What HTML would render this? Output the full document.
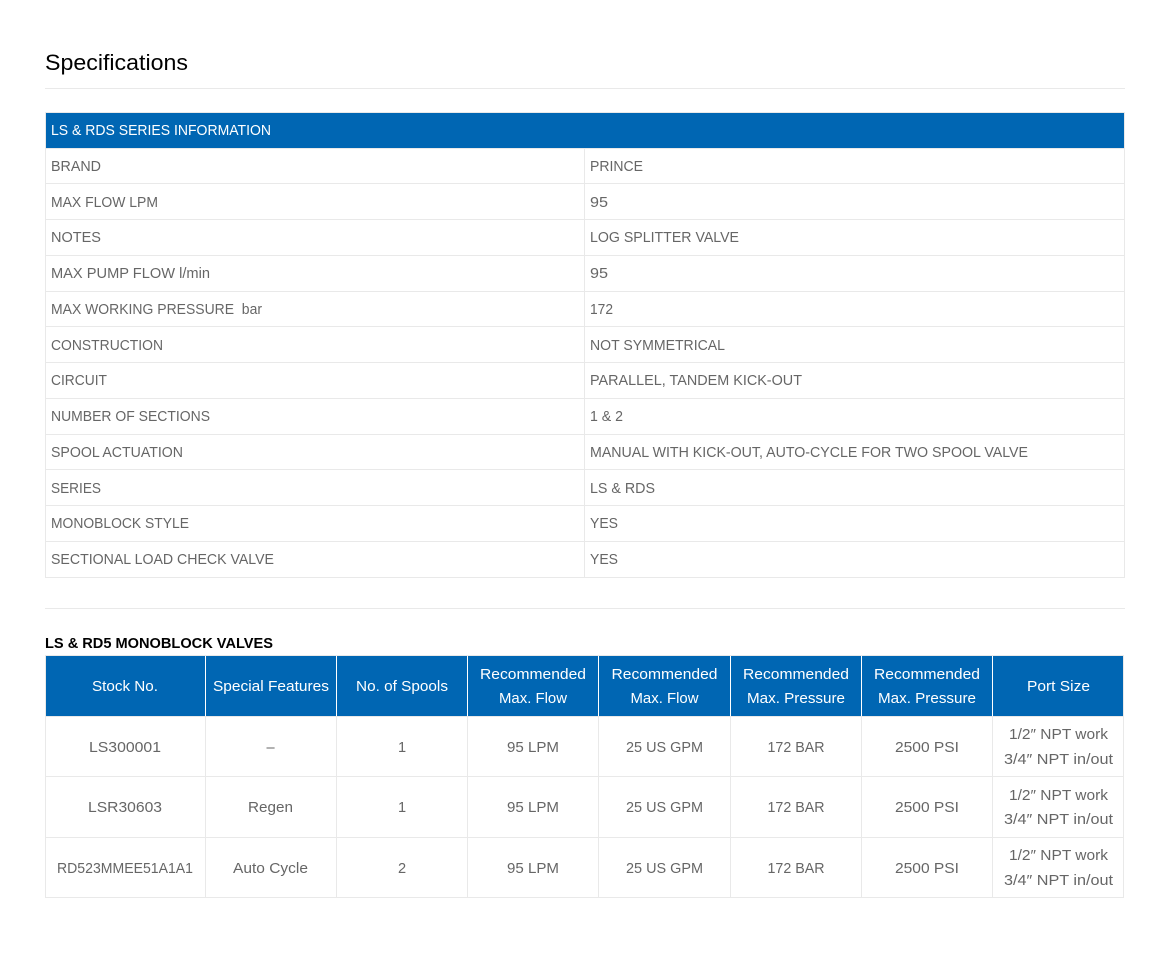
<!DOCTYPE html>
<html lang="en">
<head>
<meta charset="utf-8">
<title>Specifications</title>
<style>
html,body{margin:0;padding:0;background:#fff;width:1170px;height:973px;overflow:hidden}
svg{display:block}
text{font-family:"Liberation Sans",sans-serif;font-size:14.6px;fill:#666}
.w text{fill:#fff}
.c text{text-anchor:middle}
.k text{fill:#000}
.k .t{font-size:22px}
.k .b{font-weight:bold;font-size:14.4px}
.l{fill:#e9e9e9}
</style>
</head>
<body>
<svg width="1170" height="973" viewBox="0 0 1170 973" xmlns="http://www.w3.org/2000/svg">
<rect width="1170" height="973" fill="#fff"/>

<!-- rules -->
<rect class="l" x="45" y="88" width="1080" height="1"/>
<rect class="l" x="45" y="608" width="1080" height="1"/>

<!-- table 1 -->
<rect class="l" x="45" y="112" width="1080" height="466"/>
<rect x="46" y="113" width="1078" height="35" fill="#0066b3"/>
<rect x="46" y="149" width="538" height="34" fill="#fff"/><rect x="585" y="149" width="539" height="34" fill="#fff"/>
<rect x="46" y="184" width="538" height="35" fill="#fff"/><rect x="585" y="184" width="539" height="35" fill="#fff"/>
<rect x="46" y="220" width="538" height="35" fill="#fff"/><rect x="585" y="220" width="539" height="35" fill="#fff"/>
<rect x="46" y="256" width="538" height="35" fill="#fff"/><rect x="585" y="256" width="539" height="35" fill="#fff"/>
<rect x="46" y="292" width="538" height="34" fill="#fff"/><rect x="585" y="292" width="539" height="34" fill="#fff"/>
<rect x="46" y="327" width="538" height="35" fill="#fff"/><rect x="585" y="327" width="539" height="35" fill="#fff"/>
<rect x="46" y="363" width="538" height="35" fill="#fff"/><rect x="585" y="363" width="539" height="35" fill="#fff"/>
<rect x="46" y="399" width="538" height="35" fill="#fff"/><rect x="585" y="399" width="539" height="35" fill="#fff"/>
<rect x="46" y="435" width="538" height="34" fill="#fff"/><rect x="585" y="435" width="539" height="34" fill="#fff"/>
<rect x="46" y="470" width="538" height="35" fill="#fff"/><rect x="585" y="470" width="539" height="35" fill="#fff"/>
<rect x="46" y="506" width="538" height="35" fill="#fff"/><rect x="585" y="506" width="539" height="35" fill="#fff"/>
<rect x="46" y="542" width="538" height="35" fill="#fff"/><rect x="585" y="542" width="539" height="35" fill="#fff"/>

<!-- table 2 -->
<rect class="l" x="45" y="655" width="1079" height="243"/>
<rect x="46" y="656" width="1077" height="60" fill="#0066b3"/>
<g fill="#fff">
<rect x="205" y="656" width="1" height="60"/><rect x="336" y="656" width="1" height="60"/>
<rect x="467" y="656" width="1" height="60"/><rect x="598" y="656" width="1" height="60"/>
<rect x="730" y="656" width="1" height="60"/><rect x="861" y="656" width="1" height="60"/>
<rect x="992" y="656" width="1" height="60"/>
<rect x="46" y="717" width="1077" height="59"/>
<rect x="46" y="777" width="1077" height="60"/>
<rect x="46" y="838" width="1077" height="59"/>
<rect x="45" y="716" width="1079" height="0"/>
</g>
<rect class="l" x="45" y="716" width="1079" height="1"/>
<rect class="l" x="205" y="716" width="1" height="182"/>
<rect class="l" x="336" y="716" width="1" height="182"/>
<rect class="l" x="467" y="716" width="1" height="182"/>
<rect class="l" x="598" y="716" width="1" height="182"/>
<rect class="l" x="730" y="716" width="1" height="182"/>
<rect class="l" x="861" y="716" width="1" height="182"/>
<rect class="l" x="992" y="716" width="1" height="182"/>

<!-- headings -->
<g class="k">
<text class="t" x="45" y="70" textLength="143" lengthAdjust="spacingAndGlyphs">Specifications</text>
<text class="b" x="45" y="648" textLength="228" lengthAdjust="spacingAndGlyphs">LS &amp; RD5 MONOBLOCK VALVES</text>
</g>

<!-- table 1 text -->
<g class="w"><text x="51" y="135" textLength="220" lengthAdjust="spacingAndGlyphs">LS &amp; RDS SERIES INFORMATION</text></g>
<g>
<text x="51" y="171" textLength="50" lengthAdjust="spacingAndGlyphs">BRAND</text>
<text x="51" y="207" textLength="107" lengthAdjust="spacingAndGlyphs">MAX FLOW LPM</text>
<text x="51" y="242" textLength="50" lengthAdjust="spacingAndGlyphs">NOTES</text>
<text x="51" y="278" textLength="159" lengthAdjust="spacingAndGlyphs">MAX PUMP FLOW l/min</text>
<text x="51" y="314" textLength="211" lengthAdjust="spacingAndGlyphs" xml:space="preserve">MAX WORKING PRESSURE  bar</text>
<text x="51" y="350" textLength="112" lengthAdjust="spacingAndGlyphs">CONSTRUCTION</text>
<text x="51" y="385" textLength="56" lengthAdjust="spacingAndGlyphs">CIRCUIT</text>
<text x="51" y="421" textLength="159" lengthAdjust="spacingAndGlyphs">NUMBER OF SECTIONS</text>
<text x="51" y="457" textLength="132" lengthAdjust="spacingAndGlyphs">SPOOL ACTUATION</text>
<text x="51" y="493" textLength="50" lengthAdjust="spacingAndGlyphs">SERIES</text>
<text x="51" y="528" textLength="138" lengthAdjust="spacingAndGlyphs">MONOBLOCK STYLE</text>
<text x="51" y="564" textLength="223" lengthAdjust="spacingAndGlyphs">SECTIONAL LOAD CHECK VALVE</text>

<text x="590" y="171" textLength="53" lengthAdjust="spacingAndGlyphs">PRINCE</text>
<text x="590" y="207" textLength="18" lengthAdjust="spacingAndGlyphs">95</text>
<text x="590" y="242" textLength="149" lengthAdjust="spacingAndGlyphs">LOG SPLITTER VALVE</text>
<text x="590" y="278" textLength="18" lengthAdjust="spacingAndGlyphs">95</text>
<text x="590" y="314" textLength="23" lengthAdjust="spacingAndGlyphs">172</text>
<text x="590" y="350" textLength="135" lengthAdjust="spacingAndGlyphs">NOT SYMMETRICAL</text>
<text x="590" y="385" textLength="212" lengthAdjust="spacingAndGlyphs">PARALLEL, TANDEM KICK-OUT</text>
<text x="590" y="421" textLength="33" lengthAdjust="spacingAndGlyphs">1 &amp; 2</text>
<text x="590" y="457" textLength="438" lengthAdjust="spacingAndGlyphs">MANUAL WITH KICK-OUT, AUTO-CYCLE FOR TWO SPOOL VALVE</text>
<text x="590" y="493" textLength="65" lengthAdjust="spacingAndGlyphs">LS &amp; RDS</text>
<text x="590" y="528" textLength="28" lengthAdjust="spacingAndGlyphs">YES</text>
<text x="590" y="564" textLength="28" lengthAdjust="spacingAndGlyphs">YES</text>
</g>

<!-- table 2 header -->
<g class="w c">
<text x="125" y="691" textLength="66" lengthAdjust="spacingAndGlyphs">Stock No.</text>
<text x="271" y="691" textLength="116" lengthAdjust="spacingAndGlyphs">Special Features</text>
<text x="402" y="691" textLength="92" lengthAdjust="spacingAndGlyphs">No. of Spools</text>
<text x="533" y="679" textLength="106" lengthAdjust="spacingAndGlyphs">Recommended</text>
<text x="533" y="703" textLength="68" lengthAdjust="spacingAndGlyphs">Max. Flow</text>
<text x="664.5" y="679" textLength="106" lengthAdjust="spacingAndGlyphs">Recommended</text>
<text x="664.5" y="703" textLength="68" lengthAdjust="spacingAndGlyphs">Max. Flow</text>
<text x="796" y="679" textLength="106" lengthAdjust="spacingAndGlyphs">Recommended</text>
<text x="796" y="703" textLength="98" lengthAdjust="spacingAndGlyphs">Max. Pressure</text>
<text x="927" y="679" textLength="106" lengthAdjust="spacingAndGlyphs">Recommended</text>
<text x="927" y="703" textLength="98" lengthAdjust="spacingAndGlyphs">Max. Pressure</text>
<text x="1058.5" y="691" textLength="63" lengthAdjust="spacingAndGlyphs">Port Size</text>
</g>

<!-- table 2 body -->
<g class="c">
<text x="125" y="752" textLength="72" lengthAdjust="spacingAndGlyphs">LS300001</text>
<text x="270.5" y="752">–</text>
<text x="402" y="752">1</text>
<text x="533" y="752" textLength="52" lengthAdjust="spacingAndGlyphs">95 LPM</text>
<text x="664.5" y="752" textLength="77" lengthAdjust="spacingAndGlyphs">25 US GPM</text>
<text x="796" y="752" textLength="57" lengthAdjust="spacingAndGlyphs">172 BAR</text>
<text x="927" y="752" textLength="64" lengthAdjust="spacingAndGlyphs">2500 PSI</text>
<text x="1058.5" y="739" textLength="99" lengthAdjust="spacingAndGlyphs">1/2″ NPT work</text>
<text x="1058.5" y="764" textLength="109" lengthAdjust="spacingAndGlyphs">3/4″ NPT in/out</text>

<text x="125" y="812" textLength="74" lengthAdjust="spacingAndGlyphs">LSR30603</text>
<text x="270.5" y="812" textLength="45" lengthAdjust="spacingAndGlyphs">Regen</text>
<text x="402" y="812">1</text>
<text x="533" y="812" textLength="52" lengthAdjust="spacingAndGlyphs">95 LPM</text>
<text x="664.5" y="812" textLength="77" lengthAdjust="spacingAndGlyphs">25 US GPM</text>
<text x="796" y="812" textLength="57" lengthAdjust="spacingAndGlyphs">172 BAR</text>
<text x="927" y="812" textLength="64" lengthAdjust="spacingAndGlyphs">2500 PSI</text>
<text x="1058.5" y="800" textLength="99" lengthAdjust="spacingAndGlyphs">1/2″ NPT work</text>
<text x="1058.5" y="824" textLength="109" lengthAdjust="spacingAndGlyphs">3/4″ NPT in/out</text>

<text x="125" y="873" textLength="136" lengthAdjust="spacingAndGlyphs">RD523MMEE51A1A1</text>
<text x="270.5" y="873" textLength="75" lengthAdjust="spacingAndGlyphs">Auto Cycle</text>
<text x="402" y="873">2</text>
<text x="533" y="873" textLength="52" lengthAdjust="spacingAndGlyphs">95 LPM</text>
<text x="664.5" y="873" textLength="77" lengthAdjust="spacingAndGlyphs">25 US GPM</text>
<text x="796" y="873" textLength="57" lengthAdjust="spacingAndGlyphs">172 BAR</text>
<text x="927" y="873" textLength="64" lengthAdjust="spacingAndGlyphs">2500 PSI</text>
<text x="1058.5" y="860" textLength="99" lengthAdjust="spacingAndGlyphs">1/2″ NPT work</text>
<text x="1058.5" y="885" textLength="109" lengthAdjust="spacingAndGlyphs">3/4″ NPT in/out</text>
</g>
</svg>
</body>
</html>
